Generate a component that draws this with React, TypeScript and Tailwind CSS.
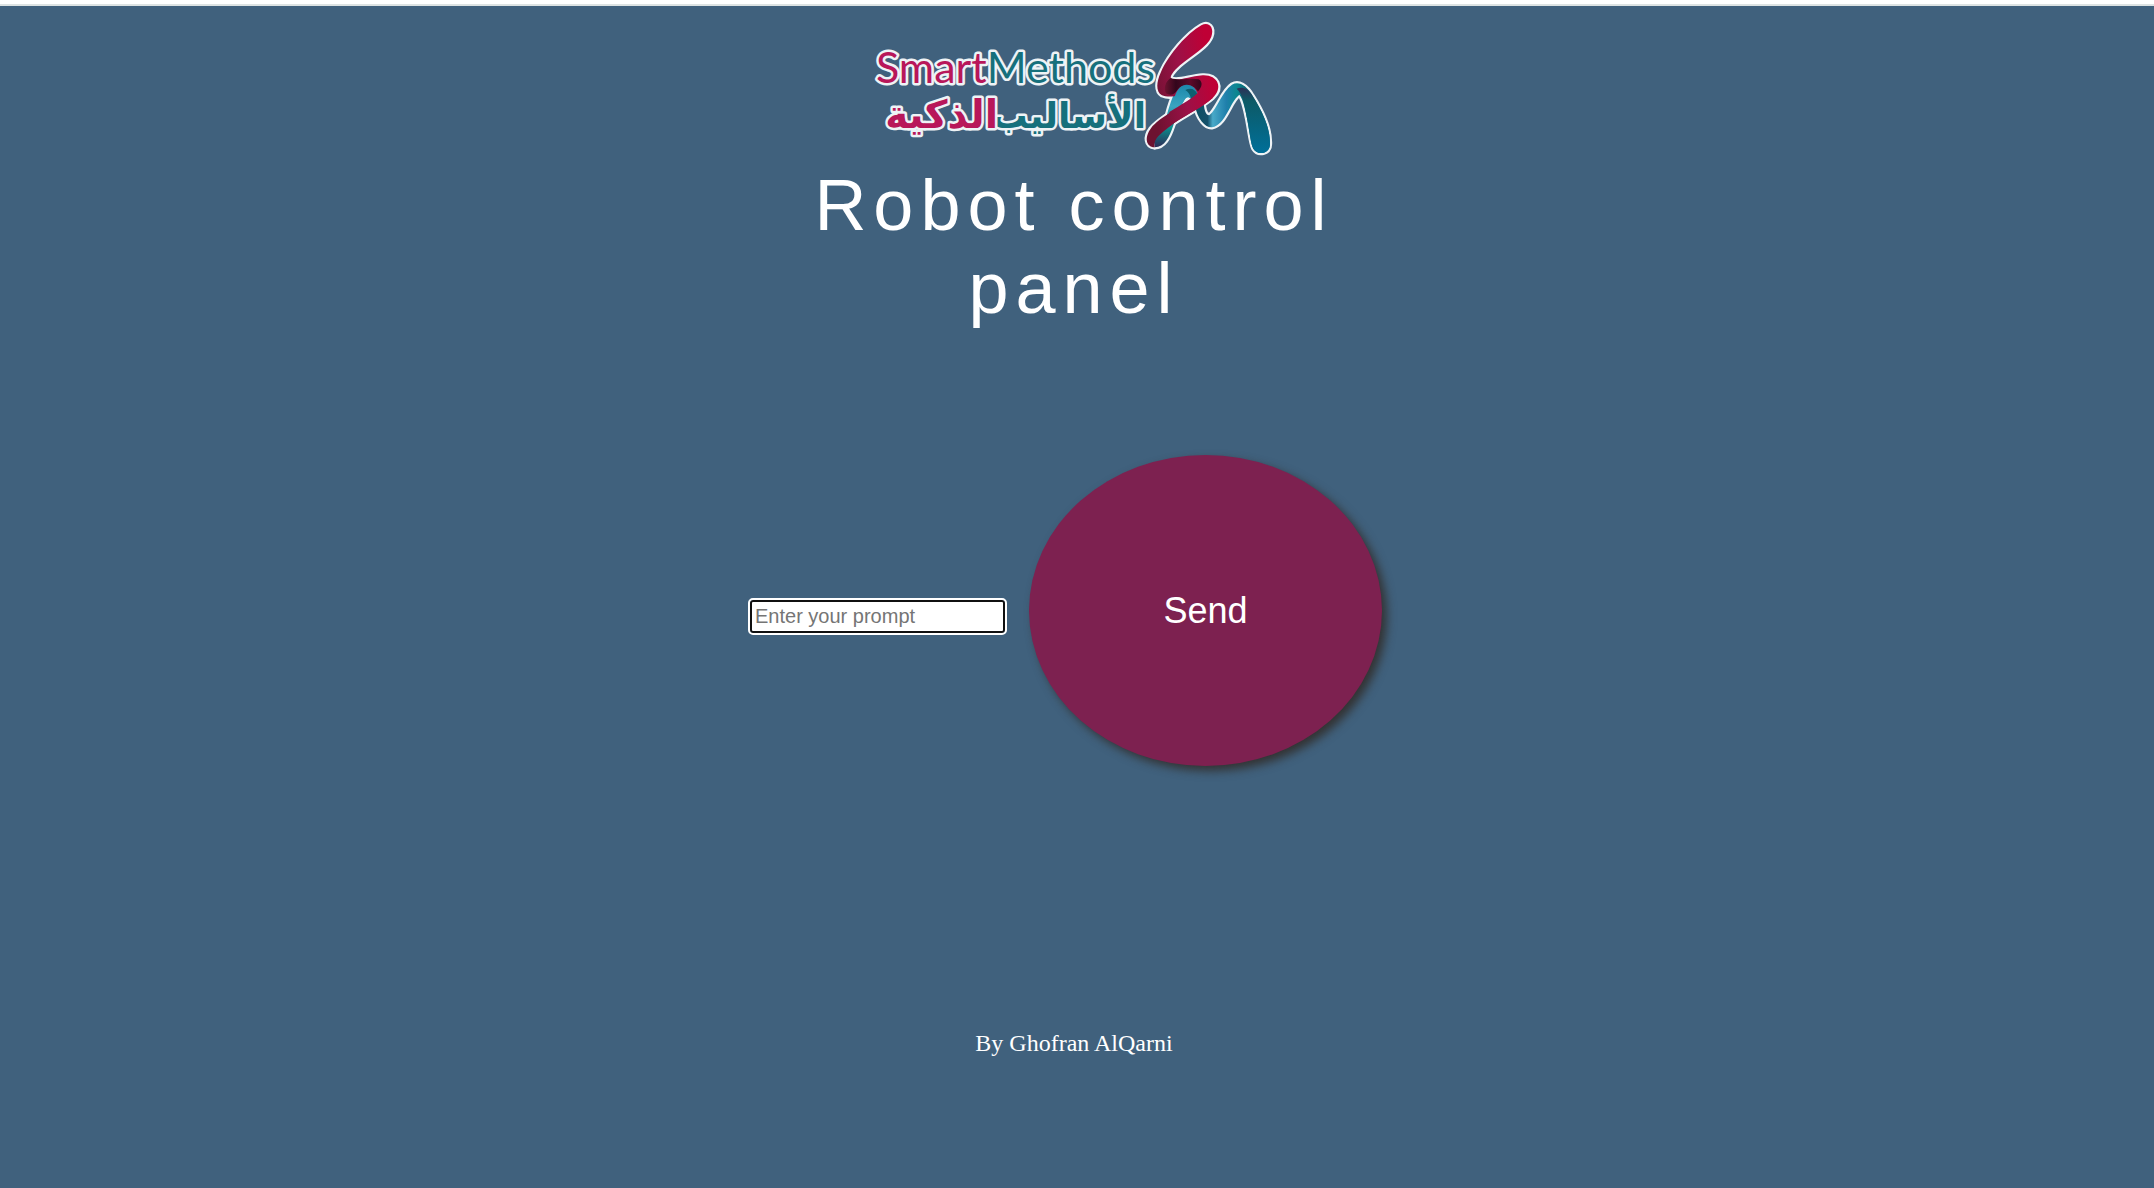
import React from "react";

const WAVE =
  "M194 282 C202 330 228 354 246 352 C288 344 298 278 328 254 C340 268 346 300 352 330 C360 372 362 400 370 416 C384 438 420 432 420 402 C422 352 392 296 368 258 C350 226 326 212 306 224 C276 244 262 296 238 316 C226 316 222 296 220 270 Z";
const LOOP =
  "M110 318 C124 266 138 226 164 224 C188 222 200 236 204 254 L184 270 C178 258 168 260 162 272 C150 292 142 312 130 346 C118 382 104 412 74 412 L70 380 Z";
const RIBBON =
  "M214 46 C236 34 254 52 244 80 C232 112 184 136 150 166 C130 184 118 200 124 206 C146 214 176 200 218 196 C262 194 282 232 248 264 C218 292 150 324 118 350 C94 370 68 386 74 412 C46 410 44 380 62 356 C88 320 160 290 204 250 C180 230 160 242 146 256 C126 262 106 260 96 256 C76 244 80 214 92 188 C118 130 172 70 214 46 Z";

function Logo() {
  return (
    <svg
      viewBox="0 0 404 142"
      className="w-[404px]"
      role="img"
      aria-label="SmartMethods"
    >
      <defs>
        <linearGradient
          id="red"
          gradientUnits="userSpaceOnUse"
          x1="60"
          x2="260"
          y1="250"
          y2="210"
        >
          <stop offset="0" stopColor="#6d1230" />
          <stop offset="0.5" stopColor="#9c1147" />
          <stop offset="0.95" stopColor="#bf0035" />
        </linearGradient>
        <linearGradient id="fold" x1="0" x2="1">
          <stop offset="0" stopColor="#6d1230" />
          <stop offset="0.3" stopColor="#33061c" />
          <stop offset="0.7" stopColor="#5d0a29" />
          <stop offset="1" stopColor="#33061c" />
        </linearGradient>
        <linearGradient id="wave" x1="0" x2="1">
          <stop offset="0" stopColor="#0b4f62" />
          <stop offset="0.17" stopColor="#14506a" />
          <stop offset="0.24" stopColor="#48a9c8" />
          <stop offset="0.42" stopColor="#1f7fab" />
          <stop offset="0.56" stopColor="#0b8790" />
          <stop offset="0.7" stopColor="#0a6270" />
          <stop offset="1" stopColor="#04698f" />
        </linearGradient>
        <linearGradient id="leg" x1="0" x2="0" y1="0" y2="1">
          <stop offset="0" stopColor="#2c3157" />
          <stop offset="0.2" stopColor="#0d5a66" />
          <stop offset="1" stopColor="#006f99" />
        </linearGradient>
        <linearGradient
          id="loop"
          gradientUnits="userSpaceOnUse"
          x1="0"
          x2="0"
          y1="222"
          y2="412"
        >
          <stop offset="0" stopColor="#1b86aa" />
          <stop offset="0.35" stopColor="#3aa5c0" />
          <stop offset="0.7" stopColor="#0b8a8a" />
          <stop offset="1" stopColor="#2e2c58" />
        </linearGradient>
      </defs>
      <g
        stroke="#eef3f6"
        strokeWidth="5"
        strokeLinejoin="round"
        paintOrder="stroke"
      >
        <g fontFamily="Lato, 'Open Sans', sans-serif" fontSize="43">
          <text x="283" y="65" textAnchor="end" fill="#16707c">
            Methods
          </text>
          <text x="4" y="65" fill="#b8175a">
            Smart
          </text>
        </g>
        <g
          fontFamily="'DejaVu Sans', sans-serif"
          fontWeight="700"
          direction="rtl"
        >
          <text x="274" y="110" fontSize="36" fill="#16707c">
            الأساليب
          </text>
          <text x="126" y="110" fontSize="39" fill="#b8175a">
            الذكية
          </text>
        </g>
      </g>
      <g transform="translate(258 -8) scale(0.3333)">
        <g
          fill="#eef3f6"
          stroke="#eef3f6"
          strokeWidth="13"
          strokeLinejoin="round"
        >
          <path d={WAVE} />
          <path d={LOOP} />
          <path d={RIBBON} />
        </g>
        <path d={WAVE} fill="url(#wave)" />
        <path
          d="M320 236 C340 252 346 300 352 330 C360 372 362 400 370 416 C384 438 420 432 420 402 C422 352 392 296 368 258 C354 234 336 230 320 236 Z"
          fill="url(#leg)"
        />
        <path d={LOOP} fill="url(#loop)" />
        <path d={RIBBON} fill="url(#red)" />
        <path
          d="M122 204 C150 214 180 202 206 208 C220 216 216 232 204 244 C190 224 160 216 142 240 C134 254 120 258 108 250 C100 236 106 214 122 204 Z"
          fill="url(#fold)"
        />
        <path
          d="M134 260 C142 234 156 224 170 224 C188 224 200 238 202 250 L184 268 C178 256 168 260 162 272 L146 300 L122 300 Z"
          fill="url(#loop)"
        />
        <path
          d="M166 240 C182 232 196 238 202 252 L184 268 C180 254 176 246 166 240 Z"
          fill="#0d5f70"
        />
        <path
          d="M206 246 C190 264 150 286 118 306 L118 350 C150 324 218 292 248 264 Z"
          fill="url(#red)"
        />
      </g>
    </svg>
  );
}

export default function App() {
  return (
    <div className="bg-white pt-1">
      <main className="flex min-h-[calc(100vh-4px)] flex-col items-center border-t-2 border-[#dde3e3] bg-[#40617d] pr-1.5 pt-3 text-white">
        <Logo />
        <h1 className="mt-1 w-full max-w-[580px] text-center font-['Liberation_Sans',Arial,sans-serif] text-[72px] leading-[83px] tracking-[7px]">
          Robot control panel
        </h1>
        <form
          className="mt-[125px] flex items-center gap-6 pr-4 font-['Liberation_Sans',Arial,sans-serif]"
          onSubmit={(e) => e.preventDefault()}
        >
          <input
            type="text"
            aria-label="Enter your prompt"
            placeholder="Enter your prompt"
            className="mt-3 h-[33px] w-[255px] rounded-[3px] border-2 border-[#101010] bg-white px-[3px] text-[20px] text-black outline-2 outline-white placeholder:text-[#757575]"
          />
          <button
            type="submit"
            className="h-[311px] w-[353px] rounded-[50%] bg-[#7d2150] text-[36px] shadow-[5px_5px_10px_#333]"
          >
            Send
          </button>
        </form>
        <p className="mt-[263px] font-['Liberation_Serif','Times_New_Roman',serif] text-[24px] leading-7">
          By Ghofran AlQarni
        </p>
      </main>
    </div>
  );
}
